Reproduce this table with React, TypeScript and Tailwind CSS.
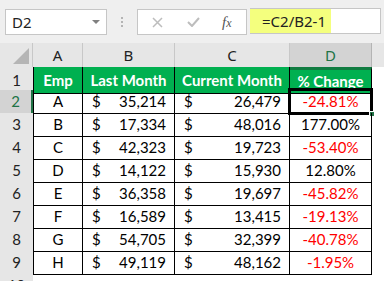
import React from "react";

const rows = [
  ["A", "35,214", "26,479", "-24.81%", true],
  ["B", "17,334", "48,016", "177.00%", false],
  ["C", "42,323", "19,723", "-53.40%", true],
  ["D", "14,122", "15,930", "12.80%", false],
  ["E", "36,358", "19,697", "-45.82%", true],
  ["F", "16,589", "13,415", "-19.13%", true],
  ["G", "54,705", "32,399", "-40.78%", true],
  ["H", "49,119", "48,162", "-1.95%", true],
] as const;

const cellFont = { fontFamily: "Lato, 'Liberation Sans', sans-serif" };

export default function App() {
  return (
    <div className="w-[384px] h-[281px] overflow-hidden bg-white" style={cellFont}>
      {/* Formula bar */}
      <div className="h-[43px] bg-[#efefef] flex items-start pt-[9px] pl-[5px]" style={{ fontFamily: "'Noto Sans', sans-serif" }}>
        <div className="w-[102px] h-[26px] bg-white border border-[#c6c6c6] flex items-center justify-between pl-[6px] pr-[6px]">
          <span className="text-[15px] text-[#222] leading-none">D2</span>
          <svg width="8" height="5" viewBox="0 0 8 5"><path d="M0 0h8L4 4z" fill="#808080" /></svg>
        </div>
        <div className="w-[30px] h-[26px] flex flex-col items-center justify-center gap-[2px]">
          <div className="w-[2px] h-[2px] bg-[#b4b4b4]" />
          <div className="w-[2px] h-[2px] bg-[#b4b4b4]" />
          <div className="w-[2px] h-[2px] bg-[#b4b4b4]" />
        </div>
        <div className="w-[110px] h-[26px] bg-white border border-[#c6c6c6] flex items-center">
          <svg className="ml-[14px]" width="11" height="11" viewBox="0 0 11 11"><path d="M1 1L10 10M10 1L1 10" stroke="#bdbdbd" strokeWidth="1.5" /></svg>
          <svg className="ml-[24px]" width="13" height="10" viewBox="0 0 13 10"><path d="M1 5L5 9L12 1" stroke="#bdbdbd" strokeWidth="2" fill="none" /></svg>
          <span className="ml-[22px] text-[15px] italic text-[#555] leading-none" style={{ fontFamily: "'Liberation Serif', serif" }}>
            f<span className="text-[12px]">x</span>
          </span>
        </div>
        <div className="ml-[3px] w-[131px] h-[26px] bg-white border border-[#c6c6c6] border-l-0 -mt-px flex items-stretch">
          <div className="w-[81px] bg-[#f4ff7e] flex items-center pl-[12px]">
            <span className="text-[15px] text-[#222] leading-none">=C2/B2-1</span>
          </div>
        </div>
      </div>

      {/* Column headers */}
      <div className="grid grid-cols-[33px_50px_92px_115px_82px_12px] h-[24px] bg-[#e6e6e6] text-[15px] text-[#222]" style={{ fontFamily: "'Noto Sans', sans-serif" }}>
        <div className="relative border-r border-[#c8c8c8]">
          <svg className="absolute right-[3px] bottom-[3px]" width="16" height="16" viewBox="0 0 16 16"><path d="M16 0V16H0z" fill="#b5b5b5" /></svg>
        </div>
        <div className="border-r border-[#c8c8c8] flex items-center justify-center">A</div>
        <div className="border-r border-[#c8c8c8] flex items-center justify-center">B</div>
        <div className="border-r border-[#c8c8c8] flex items-center justify-center">C</div>
        <div className="bg-[#d3d3d3] border-r border-[#b4b4b4] flex items-center justify-center text-[#217346]">D</div>
        <div />
      </div>

      {/* Row 1 */}
      <div className="grid grid-cols-[33px_50px_92px_115px_82px_12px] h-[23px] text-[15px]">
        <div className="bg-[#e6e6e6] border-b border-[#c8c8c8] flex items-center justify-center text-[#222]">1</div>
        <div className="bg-[#00b050] border-l border-b border-r border-black flex items-center justify-center text-white font-bold">Emp</div>
        <div className="bg-[#00b050] border-b border-r border-black flex items-center justify-center text-white font-bold">Last Month</div>
        <div className="bg-[#00b050] border-b border-r border-black flex items-center justify-center text-white font-bold whitespace-nowrap">Current Month</div>
        <div className="bg-[#00b050] border-b border-r border-black border-t-[3px] border-t-[#107c41] flex items-center justify-center text-white font-bold">% Change</div>
        <div />
      </div>

      {rows.map(([emp, last, cur, pct, neg], i) => (
        <div key={emp} className="grid grid-cols-[33px_50px_92px_115px_82px_12px] h-[23px] text-[15px] text-black">
          <div
            className={
              i === 0
                ? "bg-[#d3d3d3] border-b border-[#c8c8c8] border-r-2 border-r-[#217346] flex items-center justify-center text-[#217346]"
                : "bg-[#e6e6e6] border-b border-[#c8c8c8] flex items-center justify-center text-[#222]"
            }
          >
            {i + 2}
          </div>
          <div className="border-l border-b border-r border-black flex items-center justify-center">{emp}</div>
          <div className="border-b border-r border-black flex items-center justify-between pl-[9px] pr-[8px]">
            <span>$</span>
            <span>{last}</span>
          </div>
          <div className="border-b border-r border-black flex items-center justify-between pl-[9px] pr-[8px]">
            <span>$</span>
            <span>{cur}</span>
          </div>
          <div className={"relative border-b border-r border-black flex items-center justify-center " + (neg ? "text-[#ff0000]" : "text-black")}>
            {pct}
            {i === 0 && (
              <>
                <div className="absolute left-[-2px] top-[-2px] right-[-2px] bottom-[-2px] border-[3px] border-black" />
                <div className="absolute right-[-4px] bottom-[-4px] w-[6px] h-[6px] bg-[#217346] border border-white" />
              </>
            )}
          </div>
          <div />
        </div>
      ))}

      {/* Row 10 partial */}
      <div className="grid grid-cols-[33px_351px] h-[23px] text-[15px]">
        <div className="bg-[#e6e6e6] flex items-center justify-center text-[#222]">10</div>
        <div />
      </div>
    </div>
  );
}
